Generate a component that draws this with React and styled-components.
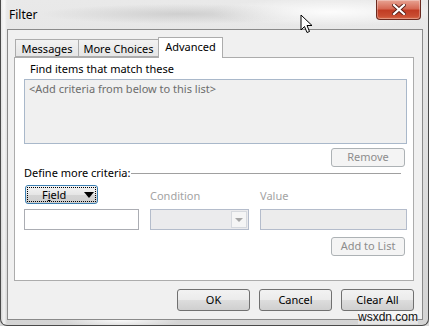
import React from "react";
import styled, { createGlobalStyle } from "styled-components";

const GlobalStyle = createGlobalStyle`
  html, body {
    margin: 0;
    padding: 0;
    background: #d8d8d8;
  }
  * {
    box-sizing: border-box;
  }
`

const font = `"Segoe UI", "Noto Sans", "Open Sans", sans-serif`;

const Window = styled.div`
  position: relative;
  width: 429px;
  height: 326px;
  display: flex;
  flex-direction: column;
  padding: 0 5px 5px 6px;
  border: 1px solid #4a4a4a;
  border-top: none;
  border-radius: 0 0 7px 7px;
  overflow: hidden;
  font-family: ${font};
  background:
    linear-gradient(90deg, rgba(255,255,255,0) 0px, rgba(255,255,255,0.7) 3px, rgba(255,255,255,0) 6px),
    radial-gradient(ellipse 120px 14px at 330px 12px, rgba(255,255,255,0.9), rgba(255,255,255,0)),
    radial-gradient(ellipse 140px 10px at 180px 14px, rgba(160,160,160,0.35), rgba(160,160,160,0)),
    radial-gradient(ellipse 60px 8px at 120px 320px, rgba(255,255,255,0.9), rgba(255,255,255,0)),
    linear-gradient(180deg, #e9e9e9, #dcdcdc 60%, #d4d4d4);
`

const TitleBar = styled.div`
  height: 29px;
  display: flex;
  align-items: flex-start;
  flex-shrink: 0;
`

const Title = styled.div`
  padding: 6px 0 0 2px;
  font-size: 12px;
  color: #000;
`

const CloseButton = styled.div`
  margin-left: auto;
  margin-right: 2px;
  width: 45px;
  height: 20px;
  display: flex;
  align-items: center;
  justify-content: center;
  border: 1px solid #6b2a20;
  border-top: none;
  border-radius: 0 0 4px 4px;
  background: linear-gradient(180deg, #e8a494 0%, #d66a55 45%, #c13c24 55%, #c94d32 85%, #d96c4c 100%);
  box-shadow: inset 0 0 0 1px rgba(255,255,255,0.3);
`

const Client = styled.div`
  flex: 1;
  display: flex;
  flex-direction: column;
  padding: 7px 8px 8px 6px;
  border: 1px solid #8a8a8a;
  background: #f0f0f0;
`

const TabRow = styled.div`
  display: flex;
  align-items: flex-end;
  padding-left: 1px;
  height: 20px;
  position: relative;
  z-index: 1;
`

const Tab = styled.div`
  width: ${p => p.$w}px;
  height: ${p => (p.$active ? 21 : 18)}px;
  margin-bottom: ${p => (p.$active ? -1 : 0)}px;
  margin-right: ${p => (p.$active ? 0 : -1)}px;
  border: 1px solid #acacac;
  border-bottom: ${p => (p.$active ? "none" : "1px solid #acacac")};
  background: ${p => (p.$active ? "#fff" : "linear-gradient(180deg, #f2f2f2, #e5e5e5)")};
  font-size: 11px;
  color: #000;
  display: flex;
  justify-content: center;
  padding-top: 1px;
  line-height: 15px;
`

const Panel = styled.div`
  height: 224px;
  border: 1px solid #acacac;
  background: #fff;
  padding: 3px 6px 0 9px;
  display: flex;
  flex-direction: column;
`

const Label = styled.div`
  font-size: 11px;
  color: ${p => (p.$disabled ? "#a3a3a3" : "#000")};
  padding-left: ${p => p.$indent || 0}px;
  line-height: 16px;
`

const ListBox = styled.div`
  margin-top: 2px;
  width: 383px;
  height: 65px;
  border: 1px solid #a9b8ca;
  background: #f0f0f0;
  padding: 2px 4px;
  font-size: 11px;
  line-height: 14px;
  color: #6d6d6d;
`

const RightRow = styled.div`
  display: flex;
  justify-content: flex-end;
  width: 381px;
  margin-top: ${p => p.$top}px;
`

const SmallButton = styled.div`
  width: 74px;
  height: 19px;
  border: 1px solid #adb2b5;
  border-radius: 3px;
  background: #f4f4f4;
  font-size: 11px;
  line-height: 16px;
  color: #8d8d8d;
  text-align: center;
`

const Section = styled.div`
  margin-top: -1px;
  height: 14px;
  display: flex;
  align-items: center;
  width: 377px;
  gap: 1px;
`

const Rule = styled.div`
  flex: 1;
  height: 1px;
  background: #a0a0a0;
  margin-top: 1px;
`

const CriteriaGrid = styled.div`
  margin-top: 5px;
  display: grid;
  grid-template-columns: 115px 99px 147px;
  column-gap: 11px;
  row-gap: 5px;
  align-items: end;
`

const FieldButton = styled.div`
  margin-left: 1px;
  width: 73px;
  height: 19px;
  border: 1px solid #3c7fb1;
  border-radius: 3px;
  background: linear-gradient(180deg, #f4f4f4 0%, #e6e6e6 50%, #d5d5d5 51%, #cfcfcf 100%);
  padding: 1px;
  display: flex;
`

const FocusRect = styled.div`
  flex: 1;
  border: 1px dotted #000;
  display: flex;
  align-items: center;
  padding-left: 14px;
  gap: 18px;
  font-size: 11px;
  color: #000;
`

const TextBox = styled.div`
  height: 21px;
  border: 1px solid ${p => (p.$disabled ? "#b4bccb" : "#abadb3")};
  background: ${p => (p.$disabled ? "#ececec" : "#fff")};
`

const Combo = styled.div`
  height: 21px;
  border: 1px solid #b4bccb;
  background: #ebebed;
  display: flex;
  justify-content: flex-end;
  padding: 1px;
`

const ComboArrow = styled.div`
  width: 16px;
  border: 1px solid #d6d9de;
  background: #f5f5f5;
  display: flex;
  align-items: center;
  justify-content: center;
`

const FooterRow = styled.div`
  margin-top: 8px;
  display: flex;
  justify-content: flex-end;
  gap: 9px;
`

const DialogButton = styled.div`
  width: 73px;
  height: 22px;
  border: 1px solid #707070;
  border-radius: 3px;
  background: linear-gradient(180deg, #f2f2f2 0%, #ebebeb 50%, #dddddd 51%, #cfcfcf 100%);
  font-size: 11px;
  line-height: 19px;
  color: #000;
  text-align: center;
`

const Cursor = styled.svg`
  position: absolute;
  left: 299px;
  top: 14px;
`

const Watermark = styled.div`
  position: absolute;
  right: 10px;
  bottom: 1px;
  font-family: "Liberation Sans", Arial, sans-serif;
  font-size: 12px;
  line-height: 13px;
  color: #111;
  background: rgba(255,255,255,0.4);
`

const tabs = [
  { name: "Messages", w: 64 },
  { name: "More Choices", w: 81 },
  { name: "Advanced", w: 65, active: true },
];

export default function App() {
  return (
    <>
      <GlobalStyle />
      <Window>
        <TitleBar>
          <Title>Filter</Title>
          <CloseButton>
            <svg width="14" height="11" viewBox="0 0 14 11">
              <path d="M2 1 L12 10 M12 1 L2 10" stroke="#5a2018" strokeWidth="4" strokeLinecap="square" />
              <path d="M2 1 L12 10 M12 1 L2 10" stroke="#fff" strokeWidth="2.2" strokeLinecap="square" />
            </svg>
          </CloseButton>
        </TitleBar>
        <Client>
          <TabRow>
            {tabs.map(t => (
              <Tab key={t.name} $w={t.w} $active={t.active}>{t.name}</Tab>
            ))}
          </TabRow>
          <Panel>
            <Label $indent={6}>Find items that match these</Label>
            <ListBox>&lt;Add criteria from below to this list&gt;</ListBox>
            <RightRow $top={4}>
              <SmallButton>Remove</SmallButton>
            </RightRow>
            <Section>
              <Label>Define more criteria:</Label>
              <Rule />
            </Section>
            <CriteriaGrid>
              <FieldButton>
                <FocusRect>
                  <span>F<u>i</u>eld</span>
                  <svg width="10" height="6" viewBox="0 0 10 6">
                    <path d="M0 0 H10 L5 6 Z" fill="#000" />
                  </svg>
                </FocusRect>
              </FieldButton>
              <Label $disabled>Condition</Label>
              <Label $disabled>Value</Label>
              <TextBox />
              <Combo>
                <ComboArrow>
                  <svg width="8" height="4" viewBox="0 0 8 4">
                    <path d="M0 0 H8 L4 4 Z" fill="#a6a6a6" />
                  </svg>
                </ComboArrow>
              </Combo>
              <TextBox $disabled />
            </CriteriaGrid>
            <RightRow $top={7}>
              <SmallButton>Add to List</SmallButton>
            </RightRow>
          </Panel>
          <FooterRow>
            <DialogButton>OK</DialogButton>
            <DialogButton>Cancel</DialogButton>
            <DialogButton>Clear All</DialogButton>
          </FooterRow>
        </Client>
        <Cursor width="13" height="20" viewBox="0 0 13 20">
          <path d="M1 1 L1 16 L4.5 12.5 L7 18.5 L9.5 17.5 L7 11.5 L12 11.5 Z" fill="#fff" stroke="#000" strokeWidth="1" strokeLinejoin="round" />
        </Cursor>
        <Watermark>wsxdn.com</Watermark>
      </Window>
    </>
  );
}
